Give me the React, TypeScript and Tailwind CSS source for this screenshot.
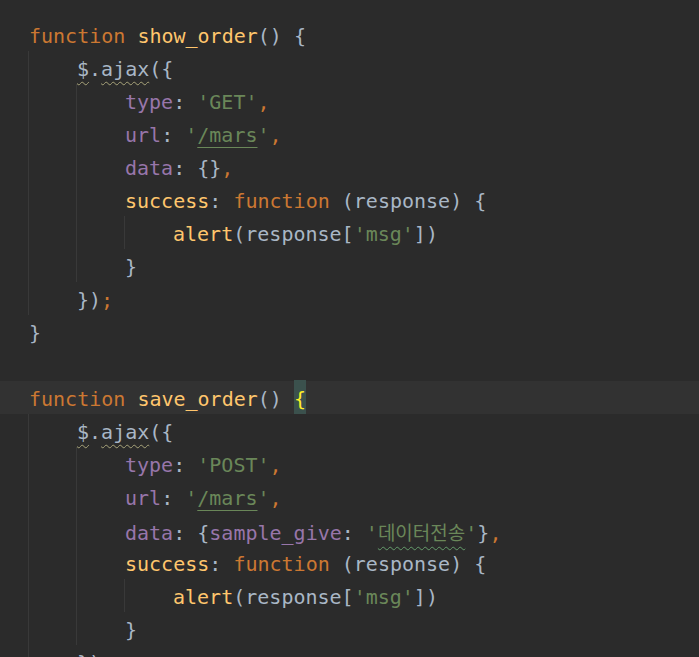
type Tok = [string, string];

const KW = "text-[#CC7832]";
const FN = "text-[#FFC66D]";
const TX = "text-[#A9B7C6]";
const PR = "text-[#9876AA]";
const ST = "text-[#6A8759]";
const WAVY = "underline decoration-wavy decoration-[#a8a47a] decoration-1 underline-offset-[5px]";
const LINK = "underline decoration-[#6A8759] decoration-1 underline-offset-[5px]";
const TYPO =
  "underline decoration-wavy decoration-[#659C6B] decoration-1 underline-offset-[6px] text-[19px] [font-family:'Noto_Sans_CJK_KR',sans-serif]";
const BRACE = "bg-[#3B514D] text-[#FFEF28] pt-[7px] pb-[3px]";

const ajax: Tok[] = [
  ["$", `${TX} ${WAVY}`],
  [".", TX],
  ["ajax", `${TX} ${WAVY}`],
  ["({", TX],
];

const url: Tok[] = [
  ["url", PR],
  [": ", TX],
  ["'", ST],
  ["/mars", `${ST} ${LINK}`],
  ["'", ST],
  [",", KW],
];

const success: Tok[] = [
  ["success", FN],
  [": ", TX],
  ["function", KW],
  [" (response) {", TX],
];

const alert: Tok[] = [
  ["alert", FN],
  ["(response[", TX],
  ["'msg'", ST],
  ["])", TX],
];

const lines: { indent: number; toks: Tok[]; current?: boolean }[] = [
  { indent: 0, toks: [["function", KW], [" ", TX], ["show_order", FN], ["() {", TX]] },
  { indent: 1, toks: ajax },
  { indent: 2, toks: [["type", PR], [": ", TX], ["'GET'", ST], [",", KW]] },
  { indent: 2, toks: url },
  { indent: 2, toks: [["data", PR], [": {}", TX], [",", KW]] },
  { indent: 2, toks: success },
  { indent: 3, toks: alert },
  { indent: 2, toks: [["}", TX]] },
  { indent: 1, toks: [["})", TX], [";", KW]] },
  { indent: 0, toks: [["}", TX]] },
  { indent: 0, toks: [] },
  {
    indent: 0,
    current: true,
    toks: [["function", KW], [" ", TX], ["save_order", FN], ["() ", TX], ["{", BRACE]],
  },
  { indent: 1, toks: ajax },
  { indent: 2, toks: [["type", PR], [": ", TX], ["'POST'", ST], [",", KW]] },
  { indent: 2, toks: url },
  {
    indent: 2,
    toks: [
      ["data", PR],
      [": {", TX],
      ["sample_give", PR],
      [": ", TX],
      ["'", ST],
      ["데이터전송", `${ST} ${TYPO}`],
      ["'", ST],
      ["}", TX],
      [",", KW],
    ],
  },
  { indent: 2, toks: success },
  { indent: 3, toks: alert },
  { indent: 2, toks: [["}", TX]] },
  { indent: 1, toks: [["})", TX], [";", KW]] },
];

export default function App() {
  return (
    <div className="w-[699px] h-[657px] overflow-hidden bg-[#2b2b2b] pt-[18px] text-[20px] leading-[33px] [font-family:'DejaVu_Sans_Mono','Liberation_Mono',monospace] whitespace-pre">
      {lines.map((line, i) => (
        <div key={i} className={`flex h-[33px] pl-[28px] ${line.current ? "bg-[#323232]" : ""}`}>
          {Array.from({ length: line.indent }).map((_, j) => (
            <span key={j} className="w-[48px] h-full shrink-0 border-l border-[#393939]" />
          ))}
          <span className="ml-px pt-[2px]">
            {line.toks.map(([t, c], k) => (
              <span key={k} className={c}>
                {t}
              </span>
            ))}
          </span>
        </div>
      ))}
    </div>
  );
}
